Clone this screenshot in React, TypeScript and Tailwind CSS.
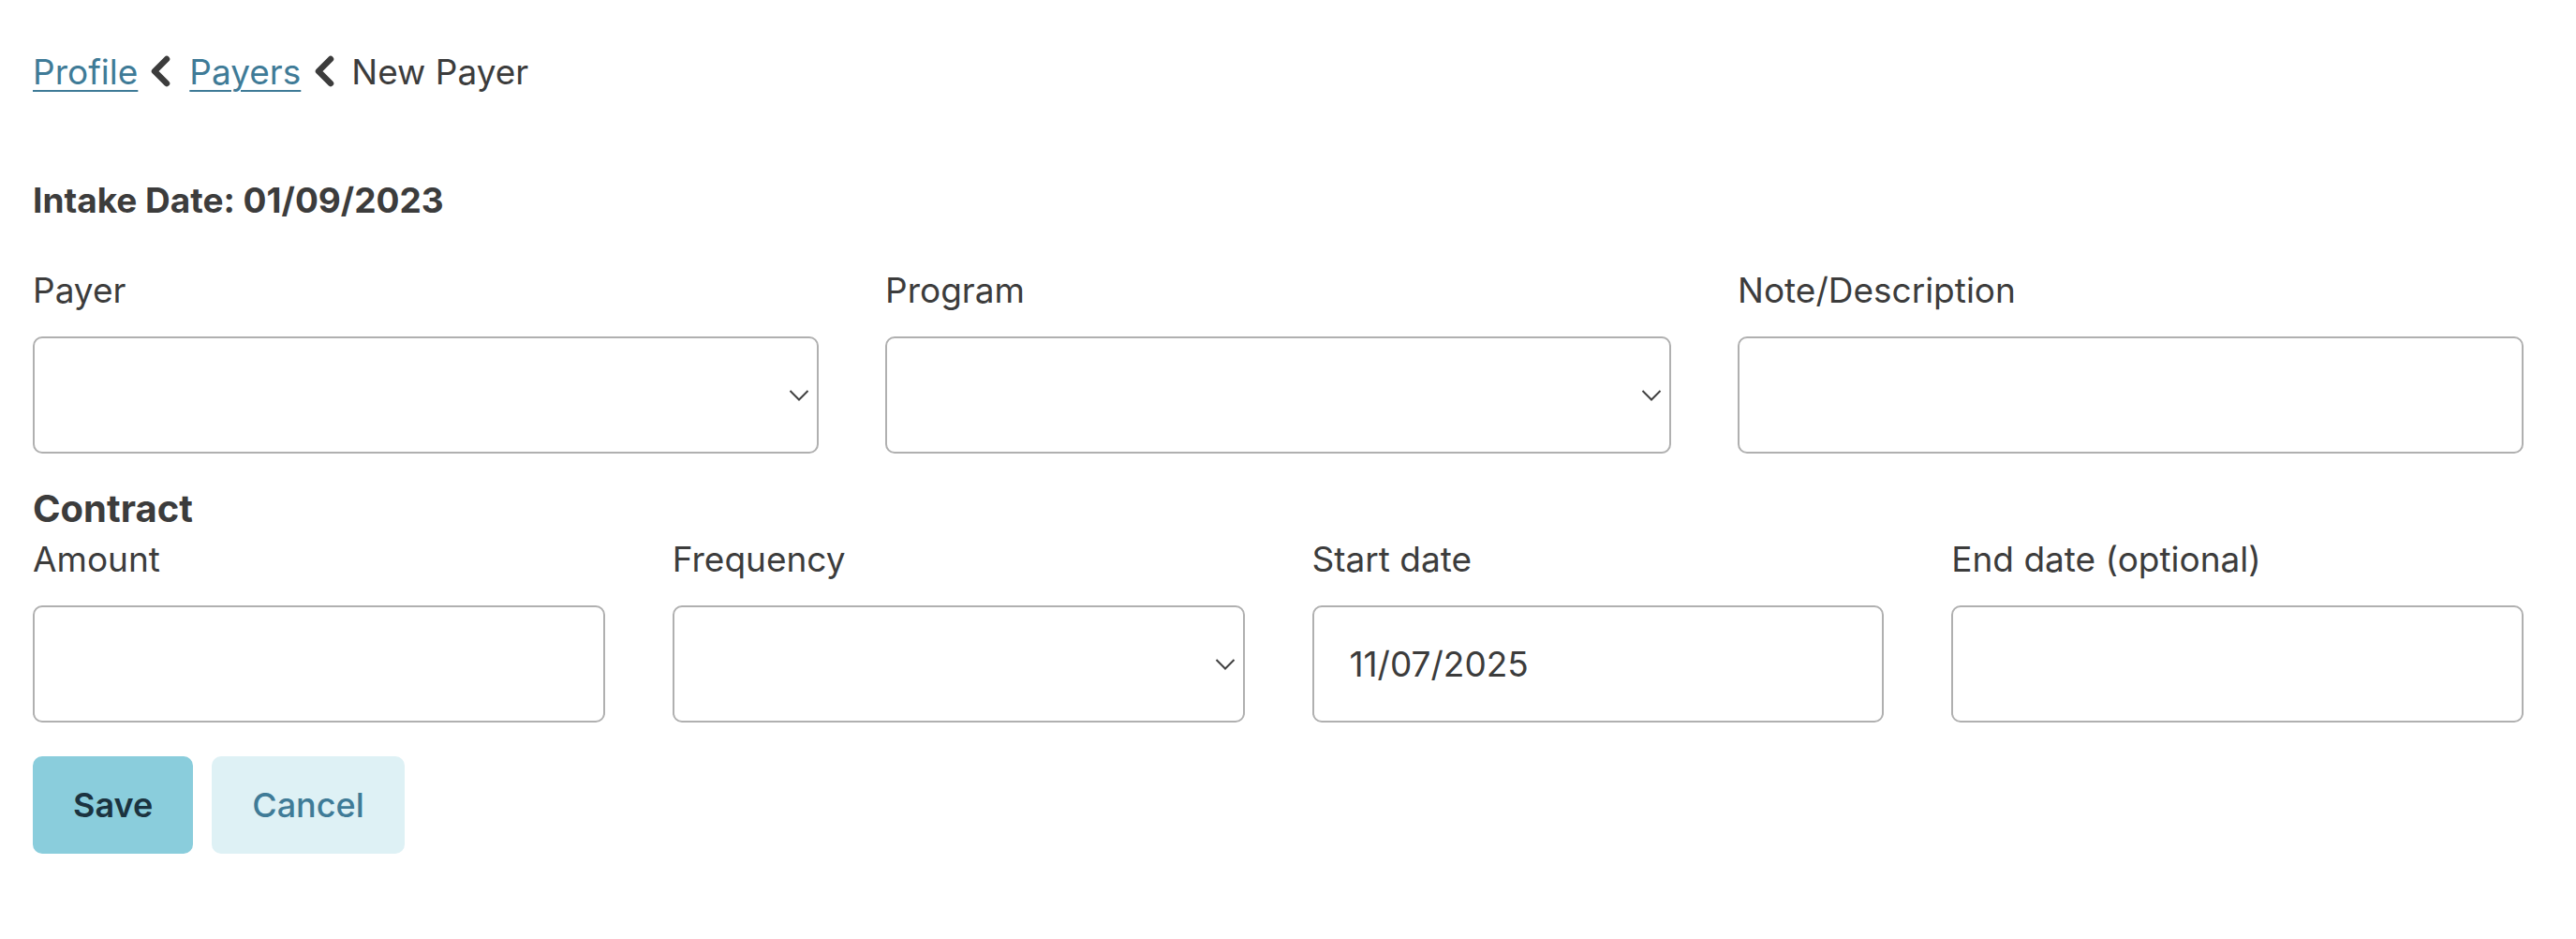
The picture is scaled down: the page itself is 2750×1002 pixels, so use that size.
import React from 'react';

const LeftChevron: React.FC = () => (
  <svg width="24" height="34" viewBox="0 0 24 34" className="shrink-0">
    <polyline
      points="19,4 6,17 19,30"
      fill="none"
      stroke="#3c3c3c"
      strokeWidth="6.5"
      strokeLinecap="round"
      strokeLinejoin="round"
    />
  </svg>
);

const SelectChevron: React.FC = () => (
  <svg width="22" height="13" viewBox="0 0 22 13">
    <polyline points="1.5,1.5 11,11 20.5,1.5" fill="none" stroke="#404040" strokeWidth="2" />
  </svg>
);

const Label: React.FC<{ children: React.ReactNode }> = ({ children }) => (
  <label className="block text-[37px] leading-[52px] text-[#3c3c3c] mb-[23px]">{children}</label>
);

const SelectBox: React.FC = () => (
  <div className="relative">
    <select className="w-full h-[125px] appearance-none bg-white border-2 border-[#b0b0b0] rounded-[10px] px-[40px] text-[37px] text-[#3c3c3c] outline-none">
      <option value=""></option>
    </select>
    <div className="absolute right-[10px] top-1/2 -translate-y-1/2 pointer-events-none flex">
      <SelectChevron />
    </div>
  </div>
);

const TextBox: React.FC<{ value?: string }> = ({ value }) => (
  <input
    type="text"
    defaultValue={value}
    className="w-full h-[125px] bg-white border-2 border-[#b0b0b0] rounded-[10px] px-[38px] text-[37px] text-[#3c3c3c] outline-none"
  />
);

const App: React.FC = () => {
  return (
    <div className="min-h-screen bg-white pl-[35px] pr-[56px] pt-[51px] font-['Inter','Noto_Sans',sans-serif] text-[#3c3c3c]">
      {/* breadcrumb */}
      <nav className="flex items-center text-[37px] leading-[52px]">
        <a href="#" className="text-[#3f7b97] underline underline-offset-[6px] decoration-2">
          Profile
        </a>
        <span className="ml-[12px] mr-[19px] flex -mt-[3px]">
          <LeftChevron />
        </span>
        <a href="#" className="text-[#3f7b97] underline underline-offset-[6px] decoration-2">
          Payers
        </a>
        <span className="ml-[13px] mr-[17px] flex -mt-[3px]">
          <LeftChevron />
        </span>
        <span>New Payer</span>
      </nav>

      <div className="mt-[85px] text-[37px] leading-[52px] font-bold">Intake Date: 01/09/2023</div>

      <div className="mt-[44px] grid grid-cols-3 gap-x-[71px]">
        <div>
          <Label>Payer</Label>
          <SelectBox />
        </div>
        <div>
          <Label>Program</Label>
          <SelectBox />
        </div>
        <div>
          <Label>Note/Description</Label>
          <TextBox />
        </div>
      </div>

      <h4 className="mt-[33px] text-[40px] leading-[52px] font-bold">Contract</h4>

      <div className="mt-[2px] grid grid-cols-4 gap-x-[72px]">
        <div>
          <Label>Amount</Label>
          <TextBox />
        </div>
        <div>
          <Label>Frequency</Label>
          <SelectBox />
        </div>
        <div>
          <Label>Start date</Label>
          <TextBox value="11/07/2025" />
        </div>
        <div>
          <Label>End date (optional)</Label>
          <TextBox />
        </div>
      </div>

      <div className="mt-[36px] flex gap-[20px]">
        <button className="h-[104px] px-[43px] rounded-[10px] bg-[#8acddc] text-[#1b3340] text-[36px] font-semibold">
          Save
        </button>
        <button className="h-[104px] px-[43px] rounded-[10px] bg-[#def1f5] text-[#3f7b97] text-[36px] font-medium">
          Cancel
        </button>
      </div>
    </div>
  );
};

export default App;
